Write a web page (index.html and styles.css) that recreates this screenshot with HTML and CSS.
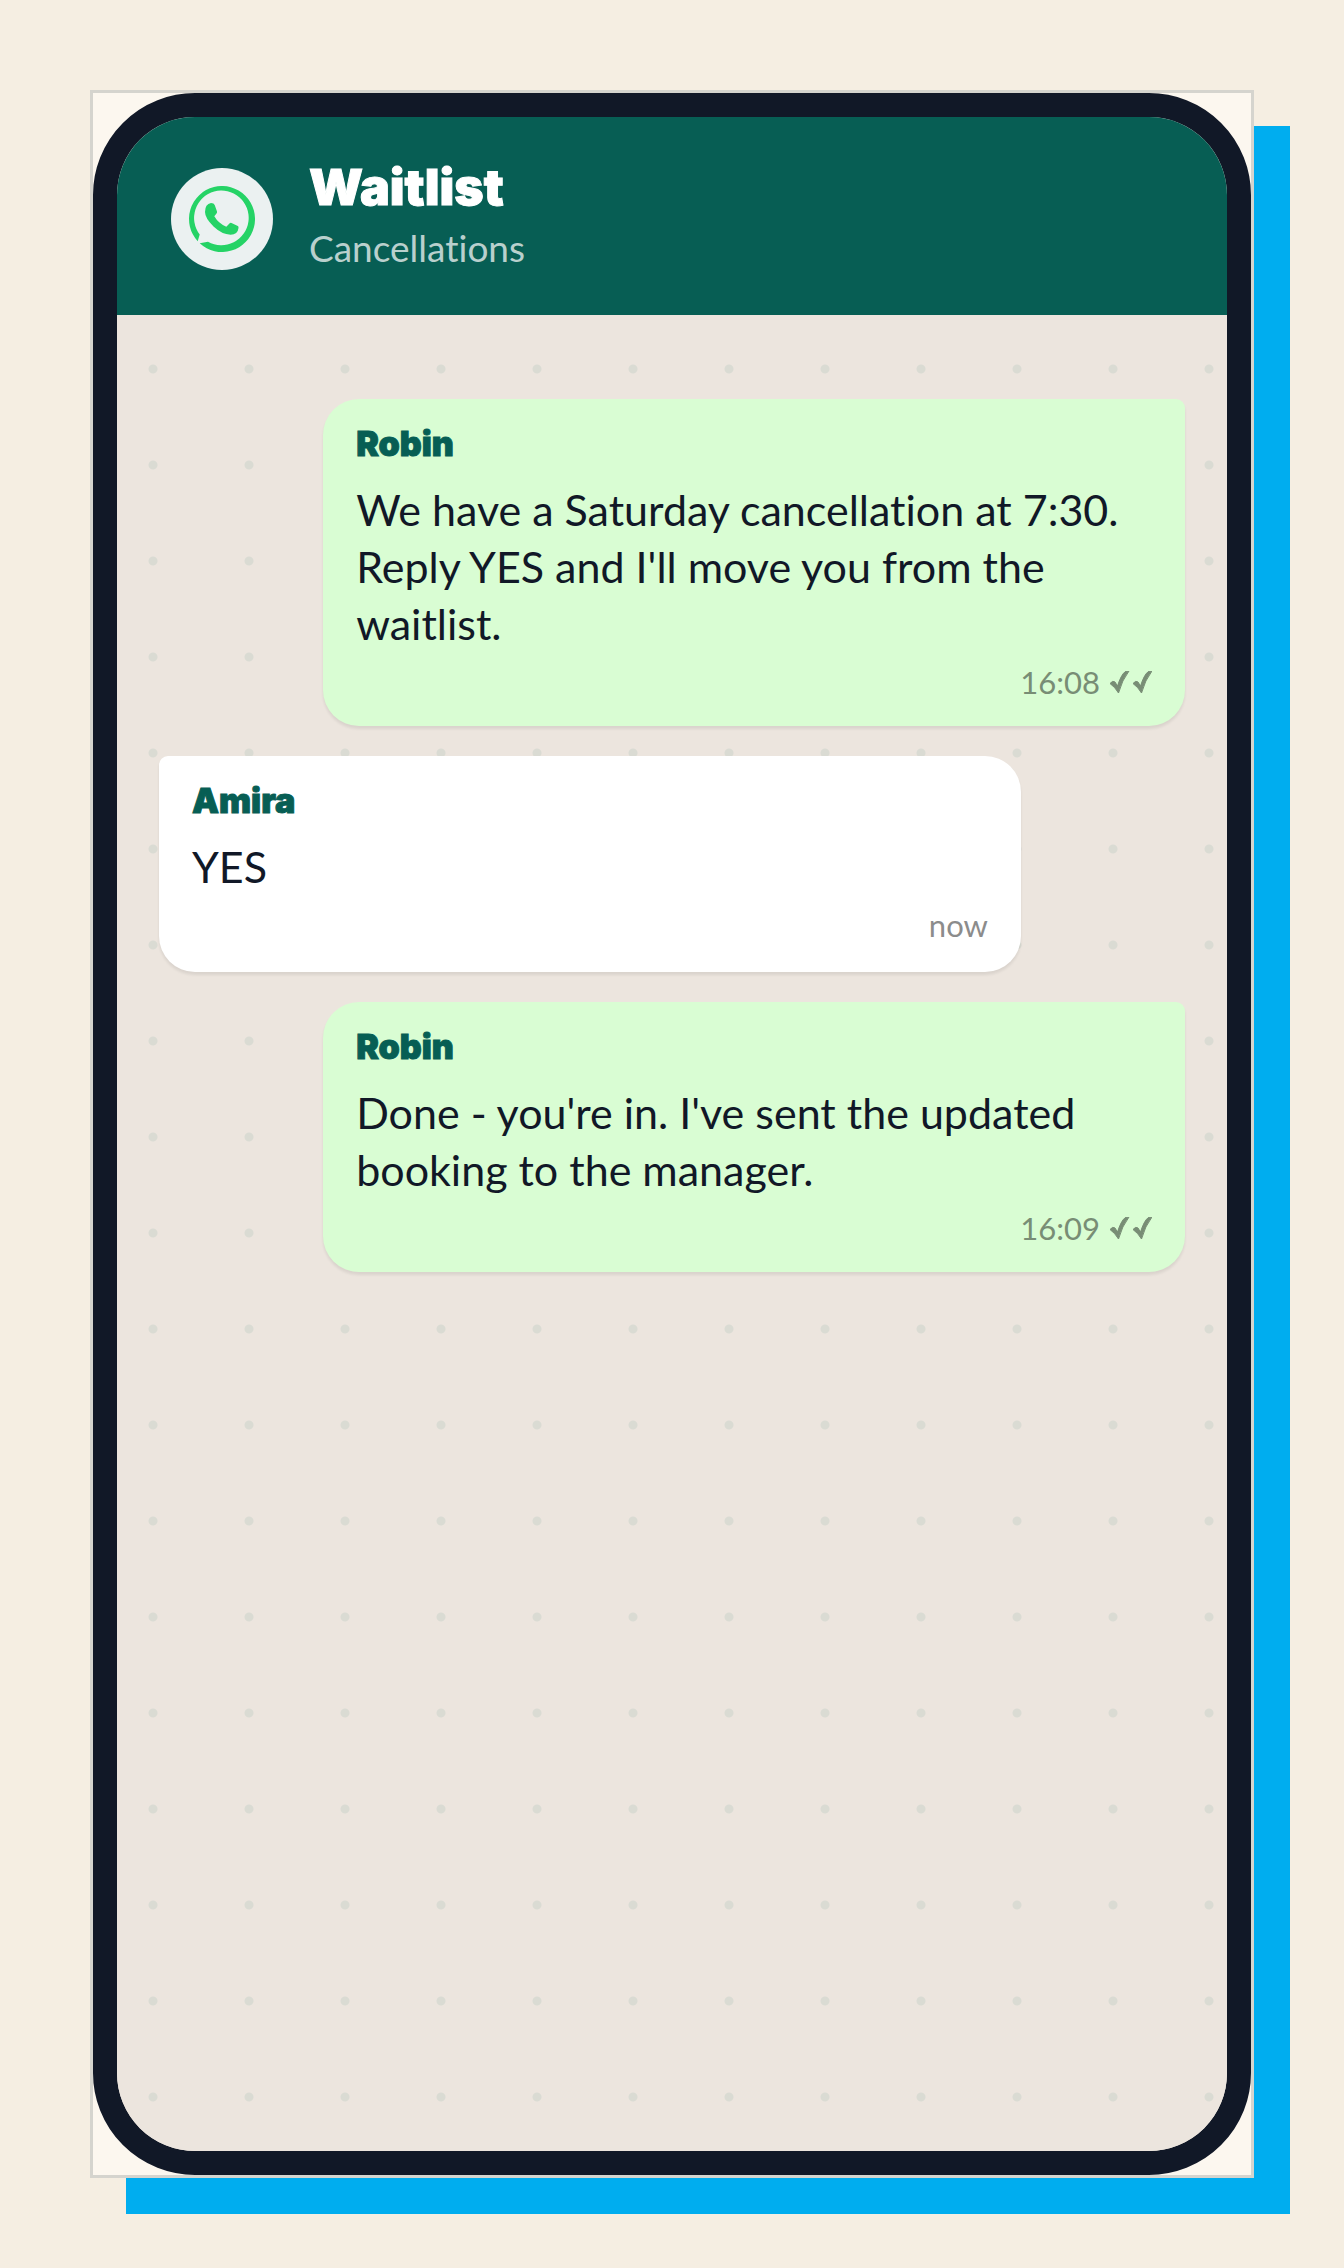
FILE: index.html
```html
<!DOCTYPE html>
<html lang="en">
<head>
  <meta charset="utf-8">
  <meta name="viewport" content="width=device-width, initial-scale=1">
  <title>Waitlist</title>
  <link rel="stylesheet" href="styles.css">
</head>
<body>
  <svg class="sprite" aria-hidden="true">
    <symbol id="ticks" viewBox="0 0 42 22">
      <path d="M0 12.500Q3 9 5 11L7.500 15Q11 4 15 .8Q17 0 19 0Q12 9 8.500 22Q5 16 0 12.500Z"/>
      <path d="M23 12.500Q26 9 28 11L30.500 15Q34 4 38 .8Q40 0 42 0Q35 9 31.500 22Q28 16 23 12.500Z"/>
    </symbol>
  </svg>
  <main class="card">
    <section class="phone">
      <header class="chat-header">
        <span class="avatar">
          <svg class="avatar-icon" viewBox="0 0 66 66" role="img" aria-label="WhatsApp">
            <path d="M8.700 55.300A33 33 0 1 1 10.700 57.300L19 55.700A27.300 27.300 0 1 0 10.700 48.500Z"/>
            <path d="M22 17Q25 17 25.700 19L28 25.500Q28.300 26.500 27.500 27.500L25.300 30.300Q29.500 37.500 37.300 40.800L40.700 37.200Q41.500 36.500 42.500 37L48.800 40Q49.800 40.500 49.500 42Q48.800 48.700 41.500 48.700Q33 48.500 24.500 40.500Q16 32 16 26Q16 18 22 17Z"/>
          </svg>
        </span>
        <div>
          <h1 class="chat-title">Waitlist</h1>
          <p class="chat-subtitle">Cancellations</p>
        </div>
      </header>
      <div class="messages">
        <article class="bubble sent">
          <h2 class="sender">Robin</h2>
          <p class="text">We have a Saturday cancellation at 7:30. Reply YES and I'll move you from the waitlist.</p>
          <p class="meta"><time>16:08</time><svg class="ticks" role="img" aria-label="Read"><use href="#ticks"/></svg></p>
        </article>
        <article class="bubble received">
          <h2 class="sender">Amira</h2>
          <p class="text">YES</p>
          <p class="meta"><time>now</time></p>
        </article>
        <article class="bubble sent">
          <h2 class="sender">Robin</h2>
          <p class="text">Done - you're in. I've sent the updated booking to the manager.</p>
          <p class="meta"><time>16:09</time><svg class="ticks" role="img" aria-label="Read"><use href="#ticks"/></svg></p>
        </article>
      </div>
    </section>
  </main>
</body>
</html>
```
FILE: styles.css
```css
* {
  box-sizing: border-box;
  margin: 0;
}

body {
  display: flex;
  min-height: 100vh;
  padding: 90px;
  background: #f5eee2;
  color: #111827;
  font-family: Lato, "Noto Sans", sans-serif;
  font-variant-ligatures: none;
}

.sprite {
  display: none;
}

.card {
  display: flex;
  flex: 1;
  border: 3px solid #d5d4ce;
  background: #fcf7ef;
  box-shadow: 36px 36px 0 #00adef;
}

.phone {
  display: flex;
  flex: 1;
  flex-direction: column;
  overflow: hidden;
  border: 24px solid #111827;
  border-radius: 102px;
  background: #ece5dd;
}

.chat-header {
  display: flex;
  align-items: center;
  gap: 36px;
  padding: 46px 54px 40px;
  background: #075e54;
  color: #fff;
}

.avatar {
  display: grid;
  place-items: center;
  width: 102px;
  height: 102px;
  border-radius: 50%;
  background: #ebf1f1;
}

.avatar-icon {
  width: 66px;
  height: 66px;
  fill: #25d366;
}

.chat-title,
.sender {
  font-family: Inter, "Open Sans", sans-serif;
  font-weight: 900;
  -webkit-text-stroke: 1px currentColor;
}

.chat-title {
  margin-bottom: 10px;
  font-size: 50px;
  line-height: 48px;
}

.chat-subtitle {
  color: #b9d0cd;
  font-size: 37px;
  line-height: 54px;
}

.messages {
  display: flex;
  flex: 1;
  flex-direction: column;
  gap: 30px;
  padding: 84px 42px;
  background: radial-gradient(circle at 36px 54px, #dadbd3 4px, transparent 5px) 0 0 / 96px 96px #ece5de;
}

.bubble {
  width: 84%;
  padding: 24px 33px 14px;
  border-radius: 36px;
  box-shadow: 0 3px 3px rgba(0, 0, 0, 0.08);
}

.sent {
  align-self: flex-end;
  border-top-right-radius: 9px;
  background: #d9fdd3;
}

.received {
  align-self: flex-start;
  padding-bottom: 17px;
  border-top-left-radius: 9px;
  background: #fff;
}

.sender {
  margin-bottom: 16px;
  color: #075e54;
  font-size: 34px;
  line-height: 42px;
}

.text {
  font-size: 43px;
  line-height: 57px;
}

.meta {
  display: flex;
  align-items: center;
  justify-content: flex-end;
  gap: 10px;
  color: #788d75;
  font-size: 31px;
  line-height: 60px;
}

.received .meta {
  color: #8c8c8c;
}

.ticks {
  width: 42px;
  height: 22px;
  overflow: visible;
  fill: currentColor;
  stroke: currentColor;
  stroke-width: 1px;
}
```
